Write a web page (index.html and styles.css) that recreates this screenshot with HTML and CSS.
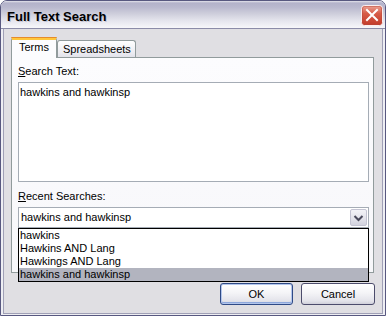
FILE: index.html
```html
<!DOCTYPE html>
<html>
<head>
<meta charset="utf-8">
<link rel="stylesheet" href="styles.css">
</head>
<body>
<div class="window">
  <div class="titlebar">
    <span class="title">Full Text Search</span>
    <span class="close">
      <svg width="22" height="21" viewBox="0 0 22 21">
        <defs>
          <linearGradient id="rg" x1="0" y1="0" x2="0" y2="1">
            <stop offset="0" stop-color="#eca597"/>
            <stop offset="0.4" stop-color="#d75c48"/>
            <stop offset="1" stop-color="#c23a2a"/>
          </linearGradient>
        </defs>
        <rect x="0.5" y="0.5" width="21" height="20" rx="3" ry="3" fill="url(#rg)" stroke="#fbeeee"/>
        <rect x="1.5" y="1.5" width="19" height="18" rx="2" ry="2" fill="none" stroke="#b8483c" stroke-opacity="0.5"/>
        <path d="M6 5 L16 15 M16 5 L6 15" stroke="#ffffff" stroke-width="2" stroke-linecap="square"/>
      </svg>
    </span>
  </div>
  <div class="client">
    <div class="inner">
      <div class="tabs">
        <div class="tab active">Terms</div>
        <div class="tab">Spreadsheets</div>
      </div>
      <div class="panel">
        <div class="label"><u>S</u>earch Text:</div>
        <div class="textbox">hawkins and hawkinsp</div>
        <div class="label second"><u>R</u>ecent Searches:</div>
        <div class="combo">
          <span class="combo-text">hawkins and hawkinsp</span>
          <span class="drop">
            <svg width="17" height="17" viewBox="0 0 17 17">
              <polyline points="4.5,7 8.5,11 12.5,7" fill="none" stroke="#4a4a5c" stroke-width="2"/>
            </svg>
          </span>
          <div class="list">
            <div class="item">hawkins</div>
            <div class="item">Hawkins AND Lang</div>
            <div class="item">Hawkings AND Lang</div>
            <div class="item selected">hawkins and hawkinsp</div>
          </div>
        </div>
      </div>
      <div class="buttons">
        <div class="btn default">OK</div>
        <div class="btn cancel">Cancel</div>
      </div>
    </div>
  </div>
</div>
</body>
</html>
```
FILE: styles.css
```css
* { box-sizing: border-box; }
html, body { margin: 0; padding: 0; }
body {
  width: 386px;
  height: 316px;
  overflow: hidden;
  background: #ffffff;
  font-family: "Liberation Sans", Arial, sans-serif;
  font-size: 11px;
  line-height: 13px;
  color: #000;
}
.window {
  width: 386px;
  height: 316px;
  border: 1px solid #585880;
  border-radius: 7px 7px 0 0;
  background: #eeeef3;
  display: flex;
  flex-direction: column;
  overflow: hidden;
}
.titlebar {
  flex: none;
  height: 28px;
  border-bottom: 1px solid #8c8ca8;
  background: linear-gradient(to bottom, #e4e4ec 0px, #b3b2ca 2px, #b9b8ce 6px, #cfcfdc 13px, #e6e6ee 20px, #f7f7fa 27px);
  display: flex;
  align-items: flex-start;
  justify-content: space-between;
  padding: 0 2px 0 6px;
}
.title {
  margin-top: 8px;
  font-size: 13px;
  line-height: 16px;
  font-weight: bold;
  color: #000;
  text-shadow: 1px 1px 0 rgba(90, 90, 130, 0.25);
}
.close {
  margin-top: 4px;
  width: 22px;
  height: 21px;
  display: block;
}
.close svg { display: block; }
.client {
  flex: 1;
  padding: 0 2px 1px 2px;
  background: #eeeef3;
  display: flex;
}
.inner {
  flex: 1;
  border: 1px solid #a0a0b6;
  border-top: none;
  background: #e0dfe3;
  display: flex;
  flex-direction: column;
}
.tabs {
  position: relative;
  z-index: 1;
  display: flex;
  align-items: flex-end;
  height: 21px;
  margin: 8px 0 -1px 7px;
}
.tab {
  height: 17px;
  margin-bottom: 1px;
  padding: 2px 4px 0 5px;
  border: 1px solid #919b9c;
  border-bottom: none;
  border-radius: 3px 3px 0 0;
  background: linear-gradient(to bottom, #ffffff, #ededf2 70%, #e2e2ea);
  white-space: nowrap;
}
.tab.active {
  height: 21px;
  margin-bottom: 0;
  padding: 1px 7px 0 7px;
  border-top: 3px solid #ffc73c;
  background: #fcfcfe;
  position: relative;
}
.tab.active::before {
  content: "";
  position: absolute;
  left: -1px;
  right: -1px;
  top: -3px;
  height: 1px;
  background: #e68b2c;
  border-radius: 3px 3px 0 0;
}
.panel {
  margin-left: 7px;
  width: 363px;
  height: 216px;
  border: 1px solid #919b9c;
  background: linear-gradient(to bottom, #fcfcfe, #f7f7fa);
  padding: 7px 4px 0 6px;
}
.label { height: 13px; margin-bottom: 4px; white-space: nowrap; }
.label.second { margin-top: 8px; }
.textbox {
  height: 100px;
  border: 1px solid #a5acb5;
  background: #fff;
  padding: 3px 1px;
}
.combo {
  position: relative;
  height: 21px;
  border: 1px solid #a5acb5;
  background: #fff;
  display: flex;
  align-items: center;
  padding: 1px;
}
.combo-text { flex: 1; padding-left: 1px; }
.drop {
  width: 17px;
  height: 17px;
  border: 1px solid #c3c3d2;
  border-radius: 2px;
  background: linear-gradient(to bottom, #f3f3f7, #e2e2ea 60%, #d2d2de);
  display: block;
}
.drop svg { display: block; margin: -1px; }
.list {
  position: absolute;
  top: calc(100% + 1px);
  left: -1px;
  right: -1px;
  border: 1px solid #000;
  background: #fff;
  z-index: 2;
}
.item { height: 13px; padding-left: 1px; white-space: nowrap; }
.item.selected { background: #b2b4bf; }
.buttons {
  display: flex;
  justify-content: flex-end;
  gap: 8px;
  margin-top: 10px;
  padding-right: 7px;
}
.btn {
  width: 73px;
  height: 22px;
  border: 1px solid #4c4c6c;
  border-radius: 3px;
  background: linear-gradient(to bottom, #ffffff, #f4f4f7 45%, #e3e3ea 85%, #d0d0da);
  text-align: center;
  line-height: 20px;
}
.btn.cancel { width: 74px; }
.btn.default {
  border-color: #2f4a86;
  box-shadow: inset 0 0 0 1px #b3c6ec, inset 0 -1px 0 1px #8ea8dc;
}
```
